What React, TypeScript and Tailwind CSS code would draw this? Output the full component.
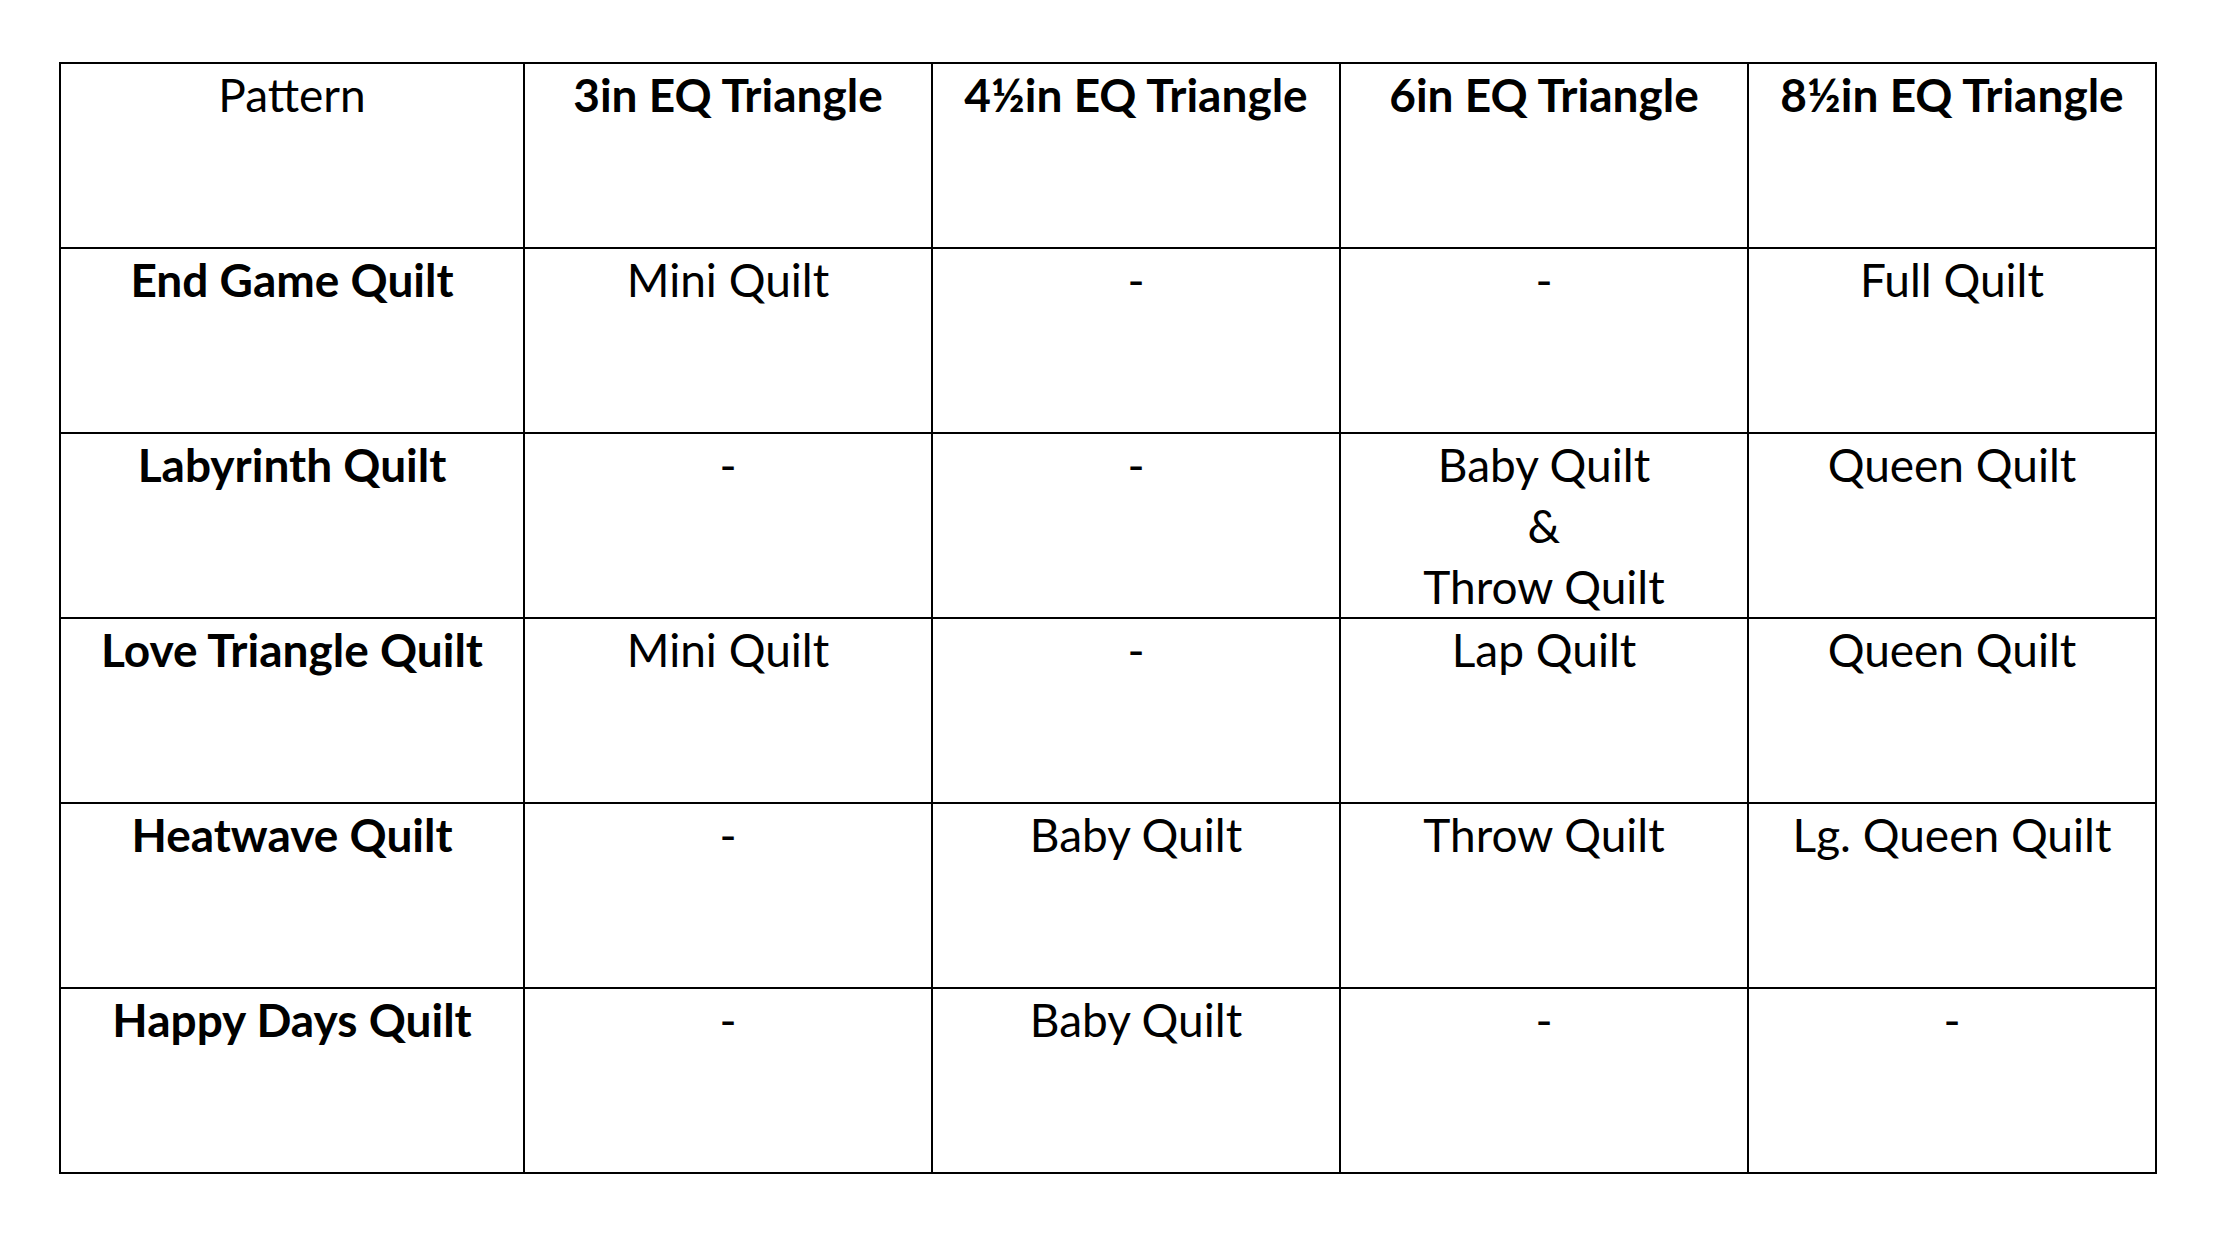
const headers = [
  { label: "Pattern", bold: false },
  { label: "3in EQ Triangle", bold: true },
  { label: "4½in EQ Triangle", bold: true },
  { label: "6in EQ Triangle", bold: true },
  { label: "8½in EQ Triangle", bold: true },
];

const rows: { pattern: string; cells: string[][] }[] = [
  { pattern: "End Game Quilt", cells: [["Mini Quilt"], ["-"], ["-"], ["Full Quilt"]] },
  { pattern: "Labyrinth Quilt", cells: [["-"], ["-"], ["Baby Quilt", "&", "Throw Quilt"], ["Queen Quilt"]] },
  { pattern: "Love Triangle Quilt", cells: [["Mini Quilt"], ["-"], ["Lap Quilt"], ["Queen Quilt"]] },
  { pattern: "Heatwave Quilt", cells: [["-"], ["Baby Quilt"], ["Throw Quilt"], ["Lg. Queen Quilt"]] },
  { pattern: "Happy Days Quilt", cells: [["-"], ["Baby Quilt"], ["-"], ["-"]] },
];

const cell =
  "h-[185px] border-r-2 border-b-2 border-black flex flex-col items-center text-center";

export default function App() {
  return (
    <div className="w-[2218px] h-[1238px] bg-white pl-[59px] pt-[62px] font-[Lato,sans-serif] text-black text-[46px] leading-[61px]">
      <div className="grid grid-cols-[464px_408px_408px_408px_408px] w-max border-t-2 border-l-2 border-black">
        {headers.map((h) => (
          <div key={h.label} className={`${cell} ${h.bold ? "font-bold" : "font-normal"}`}>
            <p>{h.label}</p>
          </div>
        ))}
        {rows.map((r) => (
          <div key={r.pattern} className="contents">
            <div className={`${cell} font-bold`}>
              <p>{r.pattern}</p>
            </div>
            {r.cells.map((lines, i) => (
              <div key={i} className={cell}>
                {lines.map((l, j) => (
                  <p key={j}>{l}</p>
                ))}
              </div>
            ))}
          </div>
        ))}
      </div>
    </div>
  );
}
